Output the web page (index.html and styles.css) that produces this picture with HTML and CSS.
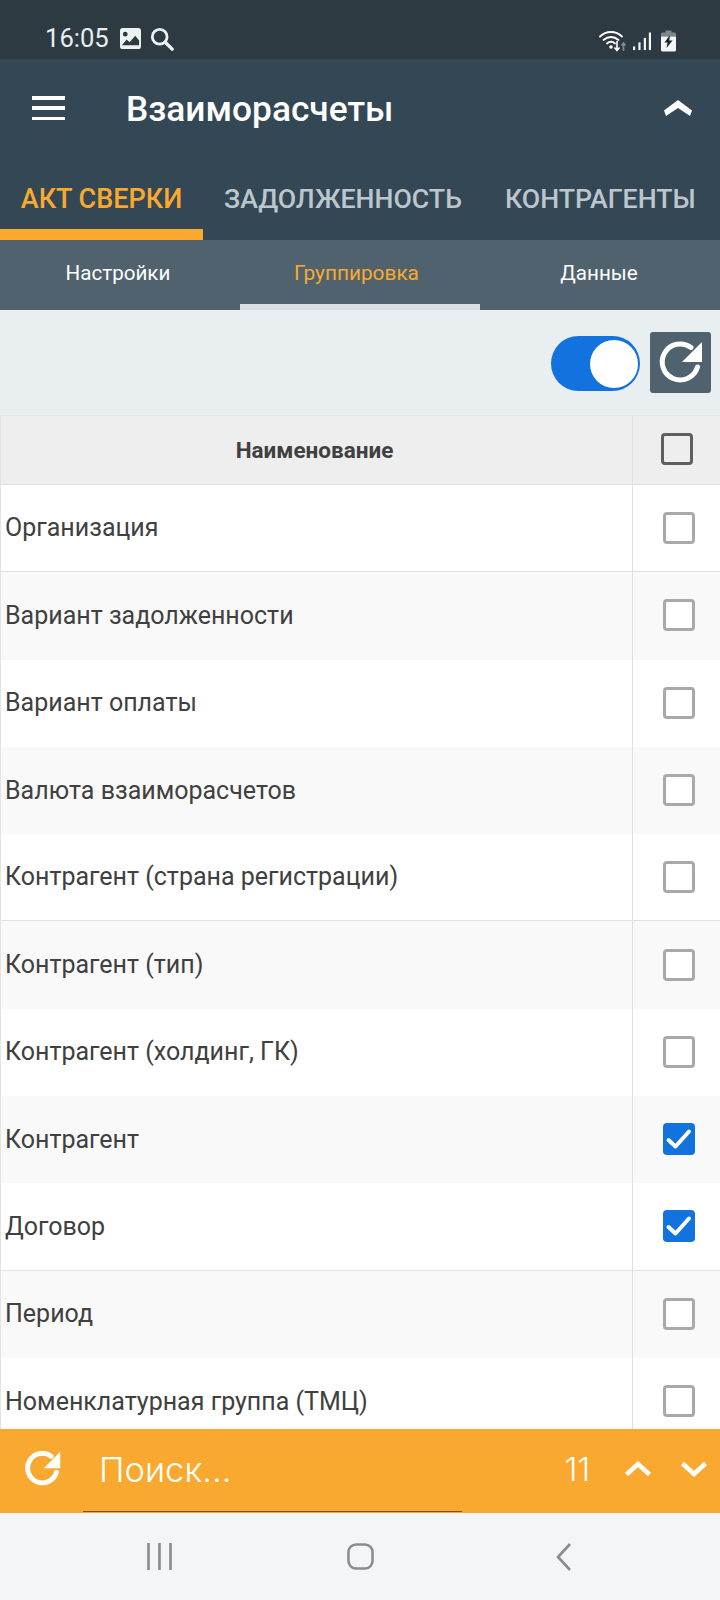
FILE: index.html
```html
<!DOCTYPE html>
<html lang="ru">
<head>
<meta charset="utf-8">
<title>Взаиморасчеты</title>
<link rel="stylesheet" href="styles.css">
</head>
<body>
<div class="app">
  <div class="status">
    <div class="status-left">
      <span class="clock">16:05</span>
      <svg class="ic-pic" viewBox="0 0 22 22"><path fill="#eef2f3" fill-rule="evenodd" d="M3 0h16a3 3 0 0 1 3 3v16a3 3 0 0 1-3 3H3a3 3 0 0 1-3-3V3a3 3 0 0 1 3-3zM5.500 4a2.500 2.500 0 1 0 0 5 2.500 2.500 0 0 0 0-5zM2 18h18v-5l-4-5-6 7-3-3z"/></svg>
      <svg class="ic-search" viewBox="0 0 26 26"><circle cx="10.500" cy="10.500" r="8" fill="none" stroke="#eef2f3" stroke-width="3"/><path d="M16.500 16.500l7.500 7.500" stroke="#eef2f3" stroke-width="3.600" stroke-linecap="round"/></svg>
    </div>
    <div class="status-right">
      <svg class="ic-wifi" viewBox="0 0 28 22"><g fill="none" stroke="#fff" stroke-width="1.800" stroke-linecap="round"><path d="M1 6.500C7 .5 17 .5 23 6.500"/><path d="M4.500 10c4.500-4 10.500-4 15 0"/><path d="M8 13.500c2.500-2.200 5.500-2.200 8 0"/></g><circle cx="12" cy="17" r="1.800" fill="#fff"/><path d="M18 11v9M15.500 17.500l2.500 3 2.500-3" fill="none" stroke="#fff" stroke-width="1.600"/><path d="M24.500 21v-8M22.500 15.500l2-2.500 2 2.500" fill="none" stroke="#7f8e95" stroke-width="1.600"/></svg>
      <svg class="ic-signal" viewBox="0 0 20 20"><g fill="#f3f5f6"><rect x="0" y="15.500" width="2.400" height="4"/><rect x="6" y="11" width="2.400" height="8.500"/><rect x="12" y="6" width="2.400" height="13.500"/><rect x="17.600" y="0" width="2.400" height="19.500"/></g></svg>
      <svg class="ic-batt" viewBox="0 0 15 21"><path fill="#7b878d" d="M4.500 0h6v2h3a1.500 1.500 0 0 1 1.500 1.500V6H0V3.500A1.500 1.500 0 0 1 1.500 2h3z"/><path fill="#f3f5f6" d="M0 6h15v13.500a1.500 1.500 0 0 1-1.500 1.500h-12A1.500 1.500 0 0 1 0 19.500z"/><path fill="#1c2428" d="M9 4.500L3.500 12h3l-1 5.500L11.500 10h-3.200z"/></svg>
    </div>
  </div>

  <header class="appbar">
    <div class="appbar-row">
      <div class="burger"><i></i><i></i><i></i></div>
      <h1 class="title">Взаиморасчеты</h1>
      <svg class="ic-collapse" viewBox="0 0 28 16"><path d="M14 0L28 10.500 26 16 14 8 2 16 0 10.500z" fill="#fff"/></svg>
    </div>
    <nav class="tabs">
      <div class="tab tab-active">АКТ СВЕРКИ</div>
      <div class="tab tab-mid">ЗАДОЛЖЕННОСТЬ</div>
      <div class="tab tab-last">КОНТРАГЕНТЫ</div>
    </nav>
  </header>

  <nav class="subtabs">
    <div class="subtab subtab-first">Настройки</div>
    <div class="subtab subtab-active">Группировка</div>
    <div class="subtab subtab-last">Данные</div>
  </nav>

  <div class="toolbar">
    <div class="switch"><span class="knob"></span></div>
    <button class="refresh-btn" type="button">
      <svg class="ic-refresh" viewBox="0 0 61 61"><path d="M47.500 35A18 18 0 1 1 41 15.500" fill="none" stroke="#fff" stroke-width="5" stroke-linecap="round"/><path d="M52 10v20H32z" fill="#fff"/></svg>
    </button>
  </div>

  <div class="table">
    <div class="row row-head">
      <div class="cell-name">Наименование</div>
      <div class="cell-check"><span class="box box-head"></span></div>
    </div>
    <div class="row line"><div class="cell-name">Организация</div><div class="cell-check"><span class="box"></span></div></div>
    <div class="row odd"><div class="cell-name">Вариант задолженности</div><div class="cell-check"><span class="box"></span></div></div>
    <div class="row"><div class="cell-name">Вариант оплаты</div><div class="cell-check"><span class="box"></span></div></div>
    <div class="row odd"><div class="cell-name">Валюта взаиморасчетов</div><div class="cell-check"><span class="box"></span></div></div>
    <div class="row line"><div class="cell-name">Контрагент (страна регистрации)</div><div class="cell-check"><span class="box"></span></div></div>
    <div class="row odd"><div class="cell-name">Контрагент (тип)</div><div class="cell-check"><span class="box"></span></div></div>
    <div class="row"><div class="cell-name">Контрагент (холдинг, ГК)</div><div class="cell-check"><span class="box"></span></div></div>
    <div class="row odd"><div class="cell-name">Контрагент</div><div class="cell-check"><span class="box box-on"><svg viewBox="0 0 32 32"><path d="M5.500 17l7 6.500L26 8.500" fill="none" stroke="#fff" stroke-width="4" stroke-linecap="round" stroke-linejoin="round"/></svg></span></div></div>
    <div class="row line"><div class="cell-name">Договор</div><div class="cell-check"><span class="box box-on"><svg viewBox="0 0 32 32"><path d="M5.500 17l7 6.500L26 8.500" fill="none" stroke="#fff" stroke-width="4" stroke-linecap="round" stroke-linejoin="round"/></svg></span></div></div>
    <div class="row odd"><div class="cell-name">Период</div><div class="cell-check"><span class="box"></span></div></div>
    <div class="row"><div class="cell-name">Номенклатурная группа (ТМЦ)</div><div class="cell-check"><span class="box"></span></div></div>
  </div>

  <div class="searchbar">
    <svg class="ic-refresh-s" viewBox="9 9 44 44"><path d="M47.500 35A18 18 0 1 1 41 15.500" fill="none" stroke="#fff" stroke-width="6" stroke-linecap="round"/><path d="M52 10v20H32z" fill="#fff"/></svg>
    <div class="search-field">Поиск...</div>
    <div class="count">11</div>
    <svg class="ic-chev" viewBox="0 0 28 16"><path d="M2.500 13.500L14 3l11.500 10.500" fill="none" stroke="#fff" stroke-width="4.500" stroke-linejoin="miter"/></svg>
    <svg class="ic-chev ic-chev-down" viewBox="0 0 28 16"><path d="M2.500 2.500L14 13l11.500-10.500" fill="none" stroke="#fff" stroke-width="4.500"/></svg>
  </div>

  <div class="navbar">
    <svg class="nav-recent" viewBox="0 0 25 27" preserveAspectRatio="none"><path d="M1.500 0v27M12.500 0v27M23.500 0v27" stroke="#8a8b8d" stroke-width="2.600" fill="none"/></svg>
    <svg class="nav-home" viewBox="0 0 28 28"><rect x="1.500" y="1.500" width="25" height="25" rx="8" fill="none" stroke="#8a8b8d" stroke-width="2.600"/></svg>
    <svg class="nav-back" viewBox="0 0 15 28"><path d="M14 1L2 14l12 13" fill="none" stroke="#8a8b8d" stroke-width="2.600"/></svg>
  </div>
</div>
</body>
</html>
```
FILE: styles.css
```css
* { box-sizing: border-box; }
html, body { margin: 0; padding: 0; }
body { font-family: Roboto, "Liberation Sans", sans-serif; background: #fff; }
.app { width: 720px; height: 1600px; display: flex; flex-direction: column; overflow: hidden; }

.status { height: 59px; background: #2d3a42; display: flex; justify-content: space-between; align-items: flex-end; padding: 0 44px 7px 45px; flex: none; }
.status-left, .status-right { display: flex; align-items: center; }
.clock { color: #e9edef; font-size: 25.600px; line-height: 28px; margin-right: 11px; }
.ic-pic { width: 21px; height: 21px; margin-right: 9px; }
.ic-search { width: 24px; height: 24px; margin-top: 2px; }
.ic-wifi { width: 28px; height: 22px; margin-right: 6px; }
.ic-signal { width: 18px; height: 19px; margin-right: 10px; }
.ic-batt { width: 15px; height: 22px; }

.appbar { background: #344755; flex: none; height: 181px; display: flex; flex-direction: column; }
.appbar-row { height: 103px; display: flex; align-items: center; padding: 0 28px 0 32px; }
.burger { width: 33px; height: 24px; display: flex; flex-direction: column; justify-content: space-between; margin-top: -5px; }
.burger i { display: block; height: 3.500px; background: #fff; }
.title { margin: -4px 0 0 61px; font-size: 35.300px; font-weight: 500; color: #fff; flex: 1; line-height: 40px; }
.ic-collapse { width: 28px; height: 16px; margin-top: -6px; }

.tabs { display: flex; height: 78px; }
.tab { font-size: 26.700px; font-weight: 500; color: #bcc6cd; line-height: 30px; padding-top: 22px; text-align: center; }
.tab-active { width: 203px; font-size: 27px; color: #f9a930; border-bottom: 11px solid #f9a930; }
.tab-mid { width: 273px; padding-left: 7px; }
.tab-last { width: 244px; text-align: left; padding-left: 29px; white-space: nowrap; }

.subtabs { height: 70px; background: #50626e; display: grid; grid-template-columns: 240px 240px 240px; flex: none; }
.subtab { text-align: center; color: #fff; font-size: 20.600px; line-height: 22px; padding-top: 22px; }
.subtab-first { padding-right: 4px; }
.subtab-last { padding-right: 2px; }
.subtab-active { color: #f9a930; font-size: 20.800px; border-bottom: 6px solid #d9dfe2; padding-right: 7px; }

.toolbar { height: 105px; background: #e9eef1; display: flex; justify-content: flex-end; align-items: center; padding: 0 9px 0 0; flex: none; }
.switch { width: 89px; height: 55px; border-radius: 28px; background: #1272de; display: flex; justify-content: flex-end; align-items: center; padding-right: 2px; margin-right: 10px; margin-top: 2px; }
.knob { width: 48px; height: 48px; border-radius: 50%; background: #fff; display: block; }
.refresh-btn { width: 61px; height: 61px; border: 0; border-radius: 3px; background: #4f626e; padding: 0; display: flex; align-items: center; justify-content: center; }
.ic-refresh { width: 61px; height: 61px; display: block; }

.table { flex: 1; min-height: 0; overflow: hidden; background: #fff; border-left: 1px solid #e3e3e3; border-top: 1px solid #e6e6e6; }
.row { height: 87.300px; display: flex; color: #404040; font-size: 25px; }
.row.odd { background: #f9f9f9; }
.row.line { border-bottom: 1px solid #e2e2e2; }
.row-head { height: 69px; background: #eee; border-bottom: 1px solid #e0e0e0; font-weight: 700; font-size: 22.500px; }
.cell-name { flex: 1; display: flex; align-items: center; padding-left: 4px; padding-bottom: 1px; }
.row-head .cell-name { justify-content: center; padding-right: 8px; padding-bottom: 0; }
.cell-check { width: 88px; border-left: 1px solid #e0e0e0; display: flex; align-items: center; justify-content: center; padding-left: 5px; padding-bottom: 1px; }
.row-head .cell-check { padding-left: 0; padding-bottom: 2px; }
.box { width: 32px; height: 32px; border: 3.500px solid #a9a9a9; border-radius: 4px; background: #fff; display: block; }
.box-head { border-color: #5f5f5f; background: transparent; }
.box-on { background: #1272de; border: 0; }
.box-on svg { width: 32px; height: 32px; display: block; }

.searchbar { height: 84px; flex: none; background: #f9a930; display: flex; align-items: center; position: relative; padding: 0 12px 4px 25px; color: #fff; }
.searchbar::after { content: ""; position: absolute; left: 83px; width: 379px; bottom: 1px; height: 1.500px; background: #6b5a35; }
.ic-refresh-s { width: 36px; height: 36px; }
.search-field { flex: 1; margin-left: 38px; font-family: Inter, "Open Sans", sans-serif; font-weight: 300; font-size: 34.500px; }
.count { font-family: Inter, "Open Sans", sans-serif; font-weight: 300; font-size: 32px; margin-right: 34px; }
.ic-chev { width: 28px; height: 16px; margin-right: 28px; }
.ic-chev-down { margin-right: 0; }

.navbar { height: 87px; flex: none; background: #f4f5f7; display: flex; align-items: center; position: relative; }
.nav-recent { width: 25px; height: 27px; margin-left: 147px; }
.nav-home { width: 27px; height: 27px; margin-left: 175px; }
.nav-back { width: 15px; height: 28px; margin-left: 182px; }
```
